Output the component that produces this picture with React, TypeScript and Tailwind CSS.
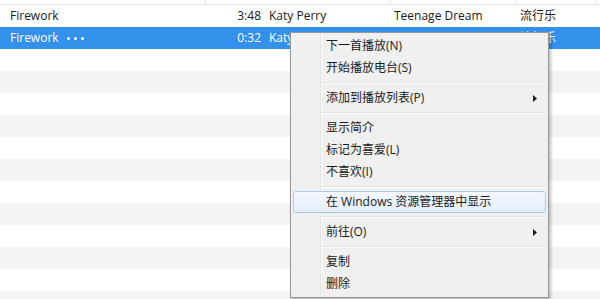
const font = { fontFamily: '"Open Sans", "Noto Sans CJK SC", sans-serif' }

interface Song {
  name: string
  time: string
  artist: string
  album: string
  genre: string
}

const songs: Song[] = [
  { name: "Firework", time: "3:48", artist: "Katy Perry", album: "Teenage Dream", genre: "流行乐" },
  { name: "Firework", time: "0:32", artist: "Katy Perry", album: "Teenage Dream", genre: "流行乐" },
]

type MenuEntry = { label: string; arrow?: boolean; active?: boolean } | "sep"

const menu: MenuEntry[] = [
  { label: "下一首播放(N)" },
  { label: "开始播放电台(S)" },
  "sep",
  { label: "添加到播放列表(P)", arrow: true },
  "sep",
  { label: "显示简介" },
  { label: "标记为喜爱(L)" },
  { label: "不喜欢(I)" },
  "sep",
  { label: "在 Windows 资源管理器中显示", active: true },
  "sep",
  { label: "前往(O)", arrow: true },
  "sep",
  { label: "复制" },
  { label: "删除" },
]

function SongRow({ song, selected }: { song: Song; selected: boolean }) {
  return (
    <div
      className={`flex h-[22px] items-center text-[12px] ${
        selected ? "bg-[#3390eb] text-white" : "bg-white text-[#1a1a1a]"
      }`}
    >
      <div className="w-[205px] pl-[10px] flex items-center">
        {song.name}
        {selected && (
          <span className="ml-[8px] flex gap-[4px]">
            <span className="w-[3px] h-[3px] rounded-full bg-white" />
            <span className="w-[3px] h-[3px] rounded-full bg-white" />
            <span className="w-[3px] h-[3px] rounded-full bg-white" />
          </span>
        )}
      </div>
      <div className="w-[56px] text-right">{song.time}</div>
      <div className="w-[129px] pl-[8px]">{song.artist}</div>
      <div className="w-[125px] pl-[4px]">{song.album}</div>
      <div className="pl-[5px]">{song.genre}</div>
    </div>
  )
}

function ContextMenu() {
  return (
    <div className="absolute left-[290px] top-[32px] w-[259px] border border-[#979797] bg-[#f0f0f0] py-[2px] shadow-[2px_2px_3px_rgba(0,0,0,0.25)] text-[12px] text-[#1a1a1a]">
      <div className="absolute left-[29px] top-0 bottom-0 w-[2px] border-l border-[#e2e3e3] bg-white/70" />
      {menu.map((item, i) =>
        item === "sep" ? (
          <div key={i} className="relative h-[8px] flex items-center pl-[30px] pr-[2px]">
            <div className="w-full h-[2px] border-t border-[#e0e0e0] bg-white" />
          </div>
        ) : (
          <div key={i} className="relative h-[22px] px-[2px]">
            <div
              className={`h-full flex items-center pl-[32px] pr-[8px] rounded-[3px] border ${
                item.active
                  ? "border-[#a8caf0] bg-gradient-to-b from-[#f4f8fd] to-[#e4eefb]"
                  : "border-transparent"
              }`}
            >
              <span className="flex-1">{item.label}</span>
              {item.arrow && (
                <svg width="4" height="7" viewBox="0 0 4 7">
                  <path d="M0 0 L4 3.5 L0 7 Z" fill="#1a1a1a" />
                </svg>
              )}
            </div>
          </div>
        )
      )}
    </div>
  )
}

export default function App() {
  const filler = Array.from({ length: 12 })

  return (
    <div className="relative w-[600px] h-[299px] overflow-hidden bg-white" style={font}>
      <div className="relative h-[5px] border-b border-[#e5e5e5]">
        <div className="absolute left-[205px] top-0 h-full border-l border-[#e5e5e5]" />
        <div className="absolute left-[390px] top-0 h-full border-l border-[#e5e5e5]" />
        <div className="absolute left-[515px] top-0 h-full border-l border-[#e5e5e5]" />
        <div className="absolute left-[595px] top-0 h-full border-l border-[#e5e5e5]" />
      </div>
      {songs.map((s, i) => (
        <SongRow key={i} song={s} selected={i === 1} />
      ))}
      {filler.map((_, i) => (
        <div key={i} className={`h-[22px] ${i % 2 === 0 ? "bg-white" : "bg-[#f3f3f3]"}`} />
      ))}
      <ContextMenu />
    </div>
  )
}
